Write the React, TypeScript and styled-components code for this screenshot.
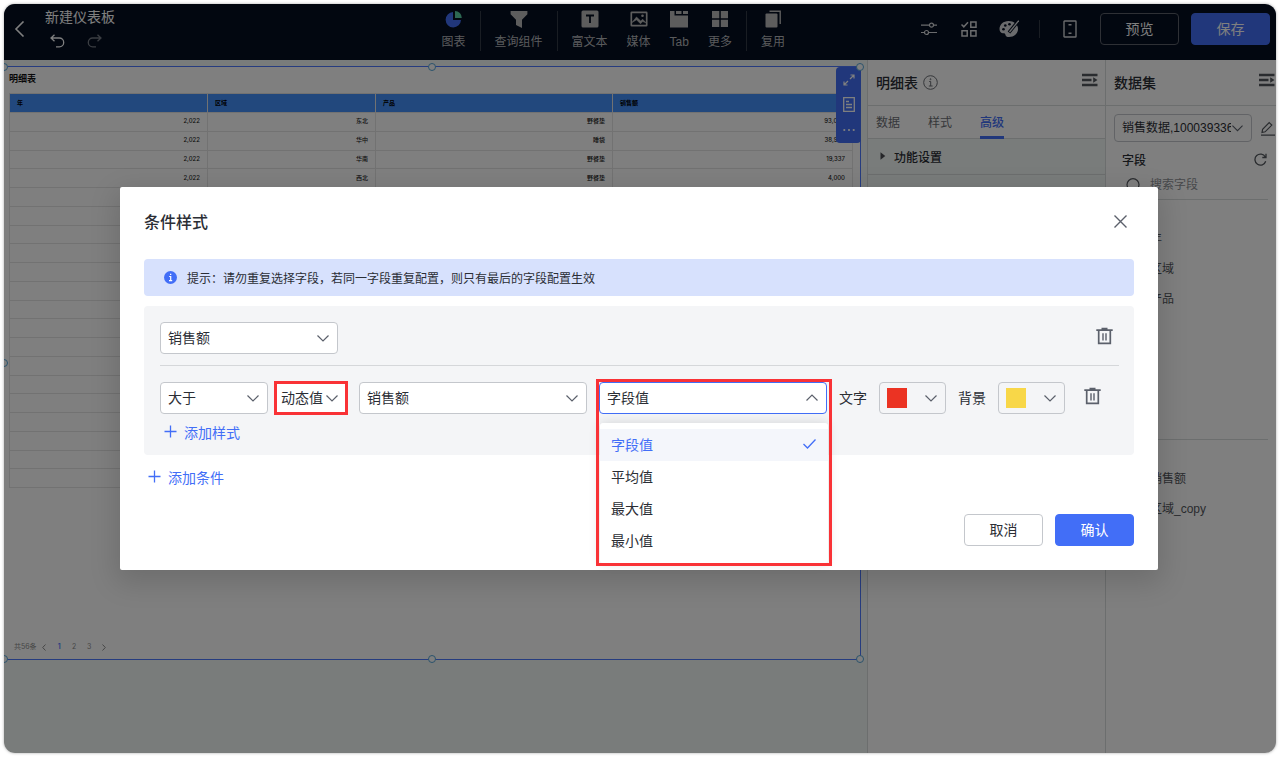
import React, { useState } from "react";
import styled, { createGlobalStyle, css } from "styled-components";

const sans = `"Liberation Sans", "Noto Sans CJK SC", sans-serif`;
const numeric = `Inter, "Noto Sans CJK SC", sans-serif`;
const blue = "#426ef7";
const ink = "#2b2e35";
const line = "#d9dcdd";

const GlobalStyle = createGlobalStyle`
  * { box-sizing: border-box; }
  body { margin: 0; background: #fff; font-family: ${sans}; color: ${ink}; font-size: 14px; }
  button, input, select { font: inherit; color: inherit; }
  button { background: none; border: 0; padding: 0; cursor: pointer; }
  h1, h2, h3, p, ul { margin: 0; padding: 0; }
  h1, h2, h3 { font-weight: 500; }
  ul { list-style: none; }
`;

const Page = styled.div`
  min-height: 100vh;
  padding: 4px;
  display: flex;
`;

const Frame = styled.div`
  position: relative;
  flex: 1;
  min-width: 0;
  display: flex;
  flex-direction: column;
  overflow: hidden;
  border-radius: 11px;
  background: #fff;
  box-shadow: 0 0 3px rgba(0, 0, 0, 0.35);
`;

/* ---------- top bar ---------- */

const TopBar = styled.header`
  height: 56px;
  flex: none;
  display: flex;
  align-items: center;
  padding: 0 6px 6px 10px;
  background: #040e20;
  color: #fff;
`;

const TopLeft = styled.div`
  flex: 1;
  display: flex;
  align-items: center;
  gap: 20px;
`;

const TitleBlock = styled.div`
  display: flex;
  flex-direction: column;
  gap: 7px;
  padding-bottom: 3px;
`;

const BoardTitle = styled.h1`
  font-size: 14px;
  line-height: 20px;
  font-weight: 400;
`;

const HistoryRow = styled.div`
  display: flex;
  gap: 22px;
  padding-left: 5px;
`;

const IconButton = styled.button<{ $w?: number; $faint?: boolean }>`
  display: flex;
  align-items: center;
  justify-content: center;
  width: ${(p) => (p.$w ? `${p.$w}px` : "auto")};
  opacity: ${(p) => (p.$faint ? 0.45 : 1)};
`;

const Tools = styled.nav`
  display: flex;
  align-items: center;
  gap: 19px;
  padding-top: 3px;
`;

const ToolGroup = styled.div`
  display: flex;
  align-items: center;
  gap: 14px;
`;

const Tool = styled.button`
  display: flex;
  flex-direction: column;
  align-items: center;
  gap: 5px;
  font-size: 12px;
  line-height: 18px;
  color: #b4b6ba;
  white-space: nowrap;
`;

const Separator = styled.span<{ $h: number }>`
  width: 1px;
  height: ${(p) => p.$h}px;
  background: #333a46;
`;

const TopRight = styled.div`
  display: flex;
  align-items: center;
  gap: 20px;
  margin-left: 134px;
  color: #d5d7da;
`;

const TopActions = styled.div`
  display: flex;
  gap: 12px;
`;

const Button = styled.button<{ $kind: "primary" | "plain" | "ghost" }>`
  width: 79px;
  height: 32px;
  border-radius: 4px;
  font-size: 14px;
  padding-bottom: 2px;
  border: 1px solid;
  ${(p) =>
    p.$kind === "primary"
      ? css`background: ${blue}; border-color: ${blue}; color: #fff;`
      : p.$kind === "plain"
      ? css`background: #fff; border-color: #c4c7cc; color: ${ink};`
      : css`background: transparent; border-color: #5c616b; color: #fff;`}
`;

/* ---------- workspace ---------- */

const Workspace = styled.div`
  flex: 1;
  display: flex;
  min-height: 0;
`;

const Canvas = styled.main`
  flex: 1;
  min-width: 0;
  padding: 6px 6px 0 0;
  background: #f3f8f6;
`;

const Widget = styled.section`
  position: relative;
  height: 594px;
  display: flex;
  flex-direction: column;
  justify-content: space-between;
  padding: 5px 7px 6px 5px;
  background: #fff;
  border: 1px solid #4c78ff;
  border-left: 0;
`;

const WidgetTitle = styled.h2`
  font-size: 9px;
  line-height: 14px;
  font-weight: 700;
  color: #111;
  margin-bottom: 7px;
`;

const Handle = styled.i<{ $x: string; $y: string }>`
  position: absolute;
  left: ${(p) => p.$x};
  top: ${(p) => p.$y};
  width: 8px;
  height: 8px;
  margin: -4px;
  border-radius: 50%;
  border: 1px solid #55a6d8;
  background: #fff;
`;

const DetailTable = styled.table`
  width: 100%;
  height: 395px;
  table-layout: fixed;
  border-collapse: collapse;
  font-family: ${numeric};
  font-size: 6px;
  line-height: 8px;
  color: #222;
  thead tr { height: 19px; }
  tbody tr { height: 18px; }
  th, td { border: 1px solid #e4e4e4; padding: 0 7px 1px; }
  th { background: #4590fb; text-align: left; font-weight: 700; color: #000; }
  td { text-align: right; font-weight: 500; }
`;

const Pager = styled.nav`
  display: flex;
  align-items: center;
  padding-left: 5px;
  font-family: ${numeric};
  font-size: 7px;
  line-height: 12px;
  color: #8d8d8d;
`;

const PageItem = styled.button<{ $on?: boolean }>`
  width: 15px;
  display: flex;
  justify-content: center;
  font-weight: ${(p) => (p.$on ? 600 : 400)};
  color: ${(p) => (p.$on ? "#4c78ff" : "inherit")};
`;

const WidgetBar = styled.div`
  position: absolute;
  top: 0;
  right: -1px;
  width: 25px;
  height: 76px;
  display: flex;
  flex-direction: column;
  background: ${blue};
  border-radius: 4px;
  color: #fff;
  button { flex: 1; }
`;

/* ---------- side panels ---------- */

const SidePanel = styled.aside<{ $w: number }>`
  width: ${(p) => p.$w}px;
  flex: none;
  overflow: hidden;
  border-left: 1px solid ${line};
  background: #fff;
`;

const PanelHead = styled.div<{ $right: number }>`
  height: 46px;
  display: flex;
  align-items: center;
  gap: 5px;
  padding: 0 ${(p) => p.$right}px 0 8px;
  border-bottom: 1px solid ${line};
  svg:last-child { margin-left: auto; margin-bottom: 5px; }
`;

const PanelTitle = styled.h2`
  font-size: 14px;
  line-height: 20px;
  font-weight: 500;
`;

const Tabs = styled.div`
  display: flex;
  gap: 28px;
  height: 33px;
  padding-left: 8px;
  border-bottom: 1px solid ${line};
`;

const Tab = styled.button<{ $on?: boolean }>`
  height: 33px;
  font-size: 12px;
  color: ${(p) => (p.$on ? blue : "#6b6e74")};
  font-weight: ${(p) => (p.$on ? 500 : 400)};
  border-bottom: 3px solid ${(p) => (p.$on ? blue : "transparent")};
`;

const Section = styled.button`
  display: flex;
  align-items: center;
  gap: 8px;
  width: 100%;
  height: 36px;
  padding: 0 0 1px 12px;
  font-size: 12px;
  font-weight: 500;
  background: #f3f8f6;
  border-bottom: 1px solid ${line};
`;

const Side = styled.div`
  padding: 8px 0 0 8px;
`;

const DatasetRow = styled.div`
  display: flex;
  align-items: center;
  gap: 8px;
`;

const FieldHead = styled.div`
  display: flex;
  justify-content: space-between;
  align-items: center;
  padding: 0 9px 4px 8px;
  margin-top: 8px;
  height: 22px;
`;

const FieldTitle = styled.h3`
  font-size: 12px;
  line-height: 18px;
  padding-top: 4px;
`;

const SearchLabel = styled.label`
  display: flex;
  align-items: center;
  gap: 10px;
  height: 28px;
  margin: 0 8px 0 0;
  padding: 0 0 2px 12px;
  border-bottom: 1px solid ${line};
  input {
    border: 0;
    outline: 0;
    background: none;
    width: 90px;
    padding: 0;
    font-size: 12px;
  }
  input::placeholder { color: #8f9297; opacity: 1; }
`;

const FieldList = styled.ul<{ $h: number }>`
  min-height: ${(p) => p.$h}px;
  margin-right: 8px;
  padding: 24px 0 0 36px;
  font-size: 12px;
  line-height: 30px;
  color: #55585e;
  & + & { border-top: 1px solid ${line}; }
`;

/* ---------- dialog ---------- */

const Overlay = styled.div`
  position: absolute;
  inset: 0;
  padding: 183px 118px 0 116px;
  background: rgba(0, 0, 0, 0.5);
`;

const Dialog = styled.div`
  padding: 24px;
  border-radius: 2px;
  background: #fff;
  box-shadow: 0 9px 28px 4px rgba(0, 0, 0, 0.14);
`;

const DialogHead = styled.div`
  display: flex;
  justify-content: space-between;
  align-items: center;
  padding-right: 7px;
  h2 { font-size: 16px; line-height: 24px; }
  button { padding-bottom: 3px; }
`;

const Notice = styled.p`
  display: flex;
  align-items: center;
  gap: 10px;
  height: 37px;
  margin-top: 24px;
  padding: 0 20px 1px;
  border-radius: 4px;
  background: #d7e1fd;
  font-size: 12px;
`;

const Card = styled.div`
  margin-top: 10px;
  padding: 16px 15px 11px 16px;
  border-radius: 4px;
  background: #f4f5f7;
`;

const Row = styled.div<{ $spread?: boolean }>`
  display: flex;
  align-items: center;
  gap: 12px;
  justify-content: ${(p) => (p.$spread ? "space-between" : "flex-start")};
  label { padding-bottom: 2px; }
`;

const Pair = styled.div`
  display: flex;
  gap: 7px;
`;

const Rule = styled.hr`
  height: 1px;
  margin: 11px 0 16px;
  border: 0;
  background: #d5d7da;
`;

const SelectBox = styled.span<{ $w: number; $h?: number; $open?: boolean; $marked?: boolean; $small?: boolean }>`
  position: relative;
  display: flex;
  align-items: center;
  flex: 0 1 ${(p) => p.$w}px;
  width: ${(p) => p.$w}px;
  select {
    appearance: none;
    width: 100%;
    height: ${(p) => p.$h ?? 32}px;
    padding: 0 ${(p) => (p.$small ? 20 : p.$marked ? 6 : 24)}px 1px ${(p) => (p.$marked ? 5 : 7)}px;
    border: 1px solid ${(p) => (p.$marked ? "#fff" : p.$open ? blue : "#c4c7cc")};
    border-radius: ${(p) => (p.$marked ? 0 : 4)}px;
    outline: ${(p) => (p.$marked ? "3px solid #f93236" : "none")};
    outline-offset: -2px;
    background: #fff;
    font-size: ${(p) => (p.$small ? 12 : 14)}px;
    color: ${ink};
  }
  > svg {
    position: absolute;
    right: 9px;
    pointer-events: none;
  }
`;

const ColorButton = styled.button<{ $color: string }>`
  display: flex;
  align-items: center;
  justify-content: space-between;
  width: 67px;
  height: 32px;
  padding: 0 8px 0 7px;
  border: 1px solid #c4c7cc;
  border-radius: 4px;
  &::before { content: ""; width: 20px; height: 20px; background: ${(p) => p.$color}; }
`;

const TrashButton = styled.button`
  width: 30px;
  height: 32px;
  display: flex;
  justify-content: center;
  align-items: center;
  padding-bottom: 4px;
`;

const Menu = styled.ul`
  position: absolute;
  z-index: 1;
  top: 41px;
  left: 1px;
  width: 228px;
  padding: 6px 0;
  border-radius: 3px;
  background: #fff;
  box-shadow: 0 0 12px rgba(0, 0, 0, 0.14);
`;

const MenuItem = styled.li<{ $on?: boolean }>`
  display: flex;
  align-items: center;
  justify-content: space-between;
  height: 32px;
  padding: 0 12px 2px 11px;
  color: ${(p) => (p.$on ? blue : ink)};
  background: ${(p) => (p.$on ? "#f4f6fb" : "transparent")};
`;

const Marker = styled.span`
  position: absolute;
  z-index: 2;
  top: -3px;
  left: -3px;
  right: -5px;
  height: 187px;
  border: 3px solid #f93236;
  pointer-events: none;
`;

const AddButton = styled.button<{ $top: number }>`
  display: flex;
  align-items: center;
  gap: 7px;
  height: 22px;
  margin-top: ${(p) => p.$top}px;
  padding: 0 4px 3px;
  color: ${blue};
  font-size: 14px;
`;

const DialogFoot = styled.div`
  display: flex;
  justify-content: flex-end;
  gap: 12px;
  margin-top: 25px;
`;

/* ---------- icons ---------- */

const Chevron = ({ up, size = 12, color = "#5b606b" }: { up?: boolean; size?: number; color?: string }) => (
  <svg width={size} height="8" viewBox="0 0 12 8" fill="none" stroke={color} strokeWidth="1.2">
    <path d={up ? "M.5 6.5 6 1l5.500 5.500" : "M.5 1.500 6 7l5.500-5.500"} />
  </svg>
);

const Trash = () => (
  <svg width="17" height="18" viewBox="0 0 17 18" fill="none" stroke="#5b606b" strokeWidth="1.7">
    <path d="M.3 3.200h16.400M5.500 1.700h6M2.700 3v13.300h11.600V3" />
    <path d="M7 6.200v7.200M10 6.200v7.200" strokeWidth="1.400" />
  </svg>
);

const Plus = () => (
  <svg width="13" height="13" viewBox="0 0 13 13" stroke={blue} strokeWidth="1.3">
    <path d="M6.500.5v12M.5 6.500h12" />
  </svg>
);

const CollapseIcon = () => (
  <svg width="16" height="14" viewBox="0 0 16 14" stroke="#55595f" fill="#55595f">
    <path d="M0 2h15.500M0 7h9.500M0 12h15.500" strokeWidth="2.400" />
    <path d="M11.200 4.300 15.500 7l-4.300 2.700z" stroke="none" />
  </svg>
);

const Undo = ({ flip }: { flip?: boolean }) => (
  <svg width="15" height="14" viewBox="0 0 15 14" fill="none" stroke="#fff" strokeWidth="1.300">
    <g transform={flip ? "translate(15 0) scale(-1 1)" : undefined}>
      <path d="M4.500.7 1 4l3.500 3.300M1 4h8.300a4.300 4.300 0 0 1 0 8.800H6" />
    </g>
  </svg>
);

const tools = {
  chart: (
    <svg width="18" height="18" viewBox="0 0 18 18">
      <path d="M8 2a7.700 7.700 0 1 0 8 8H8z" fill={blue} />
      <path d="M10 1a7 7 0 0 1 6.800 7H10z" fill="#5ad0a5" />
    </svg>
  ),
  filter: (
    <svg width="18" height="18" viewBox="0 0 18 18" fill="#bbb">
      <path d="M.6 1h16.800v3.300L12 9.800V18l-6-3V9.800L.6 4.300z" />
    </svg>
  ),
  text: (
    <svg width="18" height="18" viewBox="0 0 18 18">
      <rect x=".5" y=".5" width="17" height="17" rx="1.500" fill="#bbb" />
      <path d="M5 5.500h8M9 5.500V13" stroke="#040e20" strokeWidth="1.800" />
    </svg>
  ),
  media: (
    <svg width="18" height="18" viewBox="0 0 18 18">
      <rect x="1.300" y="2.300" width="15.400" height="13.400" rx=".5" fill="none" stroke="#bbb" strokeWidth="1.700" />
      <path d="M2 12.500 6.500 7l4.200 4 2-1.700 3.300 3.500-3.300-1.300-2.200 2.300-4-4z" fill="#bbb" stroke="#bbb" strokeWidth=".6" />
      <circle cx="12.500" cy="5.800" r="1.300" fill="#bbb" />
    </svg>
  ),
  tab: (
    <svg width="18" height="18" viewBox="0 0 18 18" fill="#bbb">
      <path d="M0 1h4.500v4.500H18v12H0zM6 1h5.500v3H6zM13 1h5v3h-5z" />
    </svg>
  ),
  more: (
    <svg width="18" height="18" viewBox="0 0 18 18" fill="#bbb">
      <path d="M1 1h7.300v7.300H1zM9.800 1H17v7.300H9.800zM1 9.800h7.300V17H1zM9.800 9.800H17V17H9.800z" />
    </svg>
  ),
  reuse: (
    <svg width="18" height="18" viewBox="0 0 18 18">
      <rect x="1.500" y="3.500" width="12" height="14" rx="1" fill="#bbb" />
      <path d="M5.500 1.300h10.700V14" fill="none" stroke="#bbb" strokeWidth="1.400" />
    </svg>
  ),
};

const Sliders = () => (
  <svg width="16" height="14" viewBox="0 0 16 14" fill="none" stroke="currentColor" strokeWidth="1.200">
    <path d="M0 3.200h8.300M12.700 3.200H16M0 10.500h3.300M7.700 10.500H16" />
    <circle cx="10.500" cy="3.200" r="2" />
    <circle cx="5.500" cy="10.500" r="2" />
  </svg>
);

const CheckGrid = () => (
  <svg width="16" height="16" viewBox="0 0 16 16" fill="none" stroke="currentColor" strokeWidth="1.500">
    <path d="m.5 3.500 2.300 2.300L7 1.300M9.800 1h5.200v5.200H9.800zM1 9.800h5.200V15H1zM9.800 9.800h5.200V15H9.800z" />
  </svg>
);

const Palette = () => (
  <svg width="20" height="18" viewBox="0 0 20 18">
    <path d="M9.500 1C4.400 1 .5 4.600.5 9c0 2.600 1.500 4.200 3.500 4.200 1.600 0 2.200.4 2.400 1.500.3 1.400 1.400 2.300 3.600 2.300 5 0 9-3.300 9-8 0-4.600-4.300-8-9.500-8z" fill="currentColor" />
    <g fill="#040e20">
      <circle cx="4.500" cy="9.200" r="1.300" />
      <circle cx="6.300" cy="5.500" r="1.300" />
      <circle cx="10.500" cy="4.300" r="1.300" />
    </g>
    <path d="M20 .2 10 12.500" stroke="#040e20" strokeWidth="3.400" />
    <path d="M19.700.6 10.500 12" stroke="currentColor" strokeWidth="1.300" />
  </svg>
);

const Phone = () => (
  <svg width="14" height="18" viewBox="0 0 14 18" fill="none" stroke="currentColor" strokeWidth="1.400">
    <rect x="1" y="1" width="12" height="16" rx=".5" />
    <path d="M5.500 4.700h3M5.500 13.300h3" />
  </svg>
);

/* ---------- data ---------- */

const rows = [
  ["2,022", "东北", "野餐垫", "93,048"],
  ["2,022", "华中", "睡袋", "38,920"],
  ["2,022", "华南", "野餐垫", "19,337"],
  ["2,022", "西北", "野餐垫", "4,000"],
];
const blankRows = Array.from({ length: 16 }, (_, i) => i);
const handles = [
  ["0px", "0px"], ["50%", "0px"], ["100%", "0px"],
  ["0px", "50%"],
  ["0px", "100%"], ["50%", "100%"], ["100%", "100%"],
];
const options = ["字段值", "平均值", "最大值", "最小值"];

function Dropdown(props: { label: string; value: string; w: number; h?: number; open?: boolean; marked?: boolean; small?: boolean; children?: React.ReactNode }) {
  return (
    <SelectBox $w={props.w} $h={props.h} $open={props.open} $marked={props.marked} $small={props.small}>
      <select aria-label={props.label} defaultValue={props.value}>
        <option>{props.value}</option>
      </select>
      <Chevron up={props.open} size={props.small ? 11 : 12} />
      {props.children}
    </SelectBox>
  );
}

function ToolButton({ icon, label }: { icon: React.ReactNode; label: string }) {
  return <Tool>{icon}{label}</Tool>;
}

export default function App() {
  const [mode, setMode] = useState(options[0]);
  return (
    <Page>
      <GlobalStyle />
      <Frame>
        <TopBar>
          <TopLeft>
            <IconButton aria-label="返回">
              <svg width="11" height="16" viewBox="0 0 11 16" fill="none" stroke="#fff" strokeWidth="1.600">
                <path d="M9.500.5 2 8l7.500 7.500" />
              </svg>
            </IconButton>
            <TitleBlock>
              <BoardTitle>新建仪表板</BoardTitle>
              <HistoryRow>
                <IconButton aria-label="撤销"><Undo /></IconButton>
                <IconButton aria-label="重做" $faint><Undo flip /></IconButton>
              </HistoryRow>
            </TitleBlock>
          </TopLeft>
          <Tools>
            <ToolGroup>
              <ToolButton icon={tools.chart} label="图表" />
              <Separator $h={40} />
              <ToolButton icon={tools.filter} label="查询组件" />
              <Separator $h={40} />
              <ToolButton icon={tools.text} label="富文本" />
            </ToolGroup>
            <ToolButton icon={tools.media} label="媒体" />
            <ToolButton icon={tools.tab} label="Tab" />
            <ToolGroup>
              <ToolButton icon={tools.more} label="更多" />
              <Separator $h={40} />
              <ToolButton icon={tools.reuse} label="复用" />
            </ToolGroup>
          </Tools>
          <TopRight>
            <IconButton $w={20} aria-label="筛选"><Sliders /></IconButton>
            <IconButton $w={20} aria-label="批量"><CheckGrid /></IconButton>
            <IconButton $w={20} aria-label="主题"><Palette /></IconButton>
            <Separator $h={18} />
            <IconButton $w={20} aria-label="移动端"><Phone /></IconButton>
            <TopActions>
              <Button $kind="ghost">预览</Button>
              <Button $kind="primary">保存</Button>
            </TopActions>
          </TopRight>
        </TopBar>

        <Workspace>
          <Canvas>
            <Widget>
              <div>
                <WidgetTitle>明细表</WidgetTitle>
                <DetailTable>
                  <colgroup>
                    <col width="198" /><col width="168" /><col width="237" /><col />
                  </colgroup>
                  <thead>
                    <tr><th>年</th><th>区域</th><th>产品</th><th>销售额</th></tr>
                  </thead>
                  <tbody>
                    {rows.map((r) => (
                      <tr key={r[3]}>{r.map((c, i) => <td key={i}>{c}</td>)}</tr>
                    ))}
                    {blankRows.map((i) => (
                      <tr key={i}><td>&nbsp;</td><td /><td /><td /></tr>
                    ))}
                  </tbody>
                </DetailTable>
              </div>
              <Pager aria-label="分页">
                共56条
                <PageItem aria-label="上一页">
                  <svg width="4" height="7" viewBox="0 0 4 7" fill="none" stroke="#8d8d8d"><path d="M3.500.5.700 3.500l2.800 3" /></svg>
                </PageItem>
                <PageItem $on>1</PageItem>
                <PageItem>2</PageItem>
                <PageItem>3</PageItem>
                <PageItem aria-label="下一页">
                  <svg width="4" height="7" viewBox="0 0 4 7" fill="none" stroke="#8d8d8d"><path d="m.5.5 2.800 3-2.800 3" /></svg>
                </PageItem>
              </Pager>
              <WidgetBar>
                <IconButton aria-label="放大">
                  <svg width="12" height="12" viewBox="0 0 12 12" fill="none" stroke="#fff" strokeWidth="1.200">
                    <path d="M7.500 1H11v3.500M11 1 7 5M4.500 11H1V7.500M1 11l4-4" />
                  </svg>
                </IconButton>
                <IconButton aria-label="详情">
                  <svg width="12" height="15" viewBox="0 0 12 15" fill="none" stroke="#fff" strokeWidth="1.300">
                    <path d="M.7.700h10.600v13.600H.700zM3 4.500h3M3 7.500h6M3 10.500h6" />
                  </svg>
                </IconButton>
                <IconButton aria-label="更多操作">
                  <svg width="12" height="4" viewBox="0 0 12 4" fill="#fff">
                    <circle cx="1.300" cy="2" r="1.100" /><circle cx="6" cy="2" r="1.100" /><circle cx="10.700" cy="2" r="1.100" />
                  </svg>
                </IconButton>
              </WidgetBar>
              {handles.map(([x, y]) => <Handle key={x + y} $x={x} $y={y} />)}
            </Widget>
          </Canvas>

          <SidePanel $w={238}>
            <PanelHead $right={7}>
              <PanelTitle>明细表</PanelTitle>
              <svg width="15" height="15" viewBox="0 0 15 15" fill="none" stroke="#6b6e74">
                <circle cx="7.500" cy="7.500" r="6.800" />
                <path d="M6.200 6.500h1.500v4.500M5.800 11h3.800" />
                <circle cx="7.500" cy="4.200" r=".5" />
              </svg>
              <CollapseIcon />
            </PanelHead>
            <Tabs>
              <Tab>数据</Tab>
              <Tab>样式</Tab>
              <Tab $on>高级</Tab>
            </Tabs>
            {["功能设置", "联动设置"].map((s) => (
              <Section key={s}>
                <svg width="6" height="8" viewBox="0 0 6 8" fill="#4a4d53"><path d="M.5.3 5.300 4 .5 7.700z" /></svg>
                {s}
              </Section>
            ))}
          </SidePanel>

          <SidePanel $w={171}>
            <PanelHead $right={1}>
              <PanelTitle>数据集</PanelTitle>
              <CollapseIcon />
            </PanelHead>
            <Side>
              <DatasetRow>
                <Dropdown label="数据集" value="销售数据,1000393366" w={138} h={28} small />
                <IconButton aria-label="编辑数据集">
                  <svg width="15" height="15" viewBox="0 0 15 15" fill="none" stroke="#55595f" strokeWidth="1.200">
                    <path d="M1 14.200h14M2 11.500l.6-3.200L9.200 1.500l2.600 2.600-6.700 6.700z" />
                  </svg>
                </IconButton>
              </DatasetRow>
              <FieldHead>
                <FieldTitle>字段</FieldTitle>
                <IconButton aria-label="刷新">
                  <svg width="13" height="13" viewBox="0 0 13 13" fill="none" stroke="#55595f" strokeWidth="1.300">
                    <path d="M11.700 8.300A5.500 5.500 0 1 1 11.300 4M12 .8V4.500H8.300" />
                  </svg>
                </IconButton>
              </FieldHead>
              <SearchLabel>
                <svg width="14" height="14" viewBox="0 0 14 14" fill="none" stroke="#55595f" strokeWidth="1.200">
                  <circle cx="7" cy="6.700" r="6" />
                  <path d="m11 11 2.500 2.500" />
                </svg>
                <input placeholder="搜索字段" aria-label="搜索字段" />
              </SearchLabel>
              <FieldList $h={239}>
                <li>年</li>
                <li>区域</li>
                <li>产品</li>
              </FieldList>
              <FieldList $h={100}>
                <li>销售额</li>
                <li>区域_copy</li>
              </FieldList>
            </Side>
          </SidePanel>
        </Workspace>

        <Overlay>
          <Dialog role="dialog" aria-labelledby="dialog-title">
            <DialogHead>
              <h2 id="dialog-title">条件样式</h2>
              <IconButton aria-label="关闭">
                <svg width="13" height="13" viewBox="0 0 13 13" stroke="#5b606b" strokeWidth="1.400">
                  <path d="m.5.5 12 12M12.500.5l-12 12" />
                </svg>
              </IconButton>
            </DialogHead>
            <Notice>
              <svg width="13" height="13" viewBox="0 0 13 13">
                <circle cx="6.500" cy="6.500" r="6.500" fill={blue} />
                <path d="M5.200 5.500h1.500v4M5 9.600h3.200M6 3.300h1.300" stroke="#fff" strokeWidth="1.200" fill="none" />
              </svg>
              提示：请勿重复选择字段，若同一字段重复配置，则只有最后的字段配置生效
            </Notice>
            <Card>
              <Row $spread>
                <Dropdown label="条件字段" value="销售额" w={178} />
                <TrashButton aria-label="删除条件"><Trash /></TrashButton>
              </Row>
              <Rule />
              <Row>
                <Pair>
                  <Dropdown label="比较方式" value="大于" w={108} />
                  <Dropdown label="取值方式" value="动态值" w={72} marked />
                </Pair>
                <Dropdown label="目标字段" value="销售额" w={228} />
                <Dropdown label="字段取值" value={mode} w={228} open key={mode}>
                  <Menu role="listbox">
                    {options.map((o) => (
                      <MenuItem key={o} role="option" aria-selected={o === mode} $on={o === mode} onClick={() => setMode(o)}>
                        {o}
                        {o === mode && (
                          <svg width="13" height="10" viewBox="0 0 13 10" fill="none" stroke={blue} strokeWidth="1.300">
                            <path d="m.5 5 4 4 8-8.500" />
                          </svg>
                        )}
                      </MenuItem>
                    ))}
                  </Menu>
                  <Marker />
                </Dropdown>
                <label htmlFor="text-color">文字</label>
                <ColorButton id="text-color" $color="#eb3323"><Chevron /></ColorButton>
                <label htmlFor="fill-color">背景</label>
                <ColorButton id="fill-color" $color="#f8d748"><Chevron /></ColorButton>
                <TrashButton aria-label="删除样式"><Trash /></TrashButton>
              </Row>
              <AddButton $top={8}><Plus />添加样式</AddButton>
            </Card>
            <AddButton $top={12}><Plus />添加条件</AddButton>
            <DialogFoot>
              <Button $kind="plain">取消</Button>
              <Button $kind="primary">确认</Button>
            </DialogFoot>
          </Dialog>
        </Overlay>
      </Frame>
    </Page>
  );
}
